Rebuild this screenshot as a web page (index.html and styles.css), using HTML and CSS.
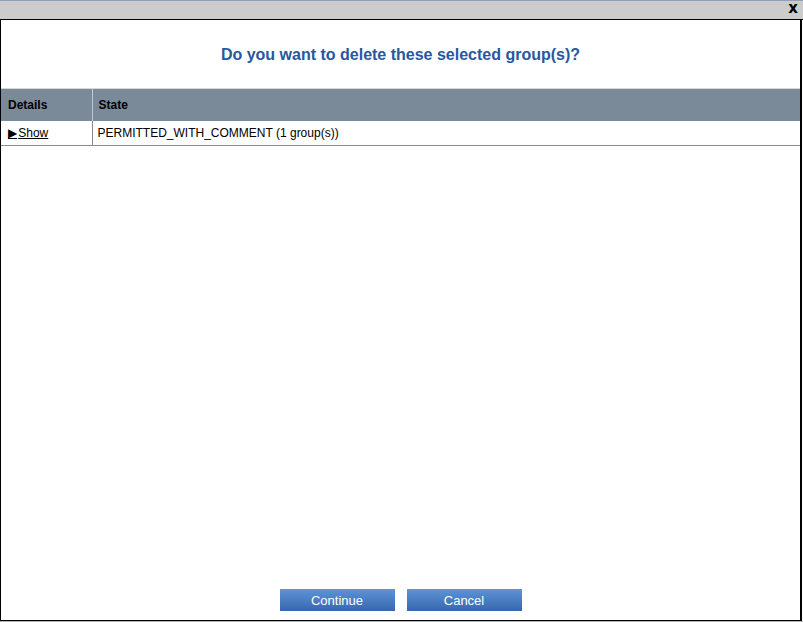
FILE: index.html
```html
<!DOCTYPE html>
<html>
<head>
<meta charset="utf-8">
<link rel="stylesheet" href="styles.css">
</head>
<body>
<div class="dialog">
  <div class="titlebar"><span class="close">x</span></div>
  <div class="content">
    <h1 class="question">Do you want to delete these selected group(s)?</h1>
    <table class="grid">
      <thead>
        <tr><th class="c1">Details</th><th>State</th></tr>
      </thead>
      <tbody>
        <tr><td class="c1"><a href="#" class="show"><span class="tri">&#9654;</span>Show</a></td><td>PERMITTED_WITH_COMMENT (1 group(s))</td></tr>
      </tbody>
    </table>
    <div class="spacer"></div>
    <div class="buttons">
      <button class="btn">Continue</button>
      <button class="btn">Cancel</button>
    </div>
  </div>
</div>
</body>
</html>
```
FILE: styles.css
```css
html, body {
  margin: 0;
  padding: 0;
  background: #fff;
}
body {
  font-family: "Liberation Sans", Arial, sans-serif;
  width: 803px;
  height: 622px;
  overflow: hidden;
}
.dialog {
  width: 803px;
  height: 622px;
  box-sizing: border-box;
  display: flex;
  flex-direction: column;
  border-bottom: 1px solid #b0b0b0;
}
.titlebar {
  height: 18px;
  background: #cccccc;
  border-top: 1px solid #8ea0bb;
  border-bottom: 1px solid #000;
  display: flex;
  justify-content: flex-end;
  align-items: center;
  padding-right: 5px;
}
.close {
  font-family: "DejaVu Sans", sans-serif;
  font-weight: bold;
  font-size: 15px;
  line-height: 15px;
  margin-top: -3px;
  color: #000;
}
.content {
  flex: 1;
  display: flex;
  flex-direction: column;
  border-left: 1px solid #000;
  border-right: 2px solid #000;
  border-bottom: 1px solid #000;
  margin-right: 1px;
}
.question {
  margin: 25px 0 0 0;
  height: 43px;
  text-align: center;
  font-size: 16px;
  font-weight: bold;
  color: #2757a0;
  line-height: 19px;
}
.grid {
  border-collapse: collapse;
  width: 100%;
  font-size: 12px;
  color: #000;
}
.grid th {
  background: #7b8a99;
  text-align: left;
  font-weight: bold;
  height: 32px;
  padding: 1px 6px 0 6px;
  border-top: 1px solid #d4d8dc;
  border-left: 1px solid #c0c6cc;
  box-sizing: border-box;
}
.grid th.c1 {
  border-left: none;
  width: 91px;
  padding-left: 7px;
}
.grid td {
  height: 25px;
  padding: 1px 6px 0 5px;
  border-left: 1px solid #8a8a8a;
  border-bottom: 1px solid #8a8a8a;
  box-sizing: border-box;
}
.grid td.c1 {
  border-left: none;
  width: 91px;
  padding-left: 7px;
}
.show {
  color: #000;
  text-decoration: underline;
}
.tri {
  font-size: 12px;
  font-family: "DejaVu Sans", sans-serif;
  margin-right: 1px;
}
.spacer { flex: 1; }
.buttons {
  display: flex;
  justify-content: center;
  gap: 12px;
  margin-bottom: 9px;
}
.btn {
  width: 115px;
  height: 22px;
  border: none;
  padding: 0;
  background: linear-gradient(#5d95d6, #3866ad);
  color: #fff;
  font-family: "Liberation Sans", Arial, sans-serif;
  font-size: 13px;
}
```
